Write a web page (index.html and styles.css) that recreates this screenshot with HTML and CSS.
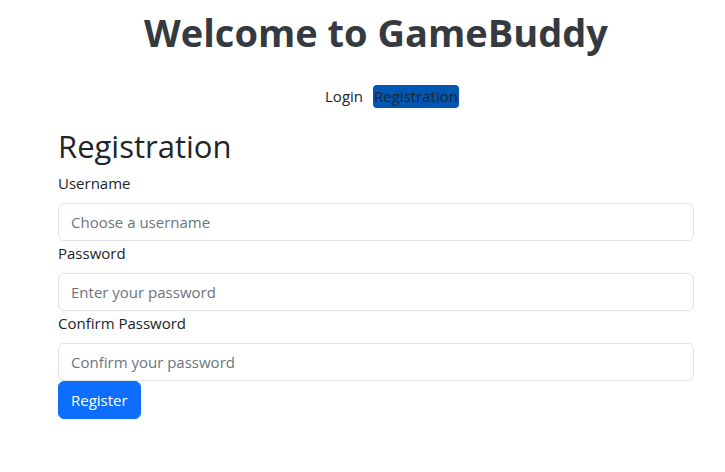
FILE: index.html
```html
<!DOCTYPE html>
<html lang="en">
<head>
<meta charset="utf-8">
<title>GameBuddy</title>
<link rel="stylesheet" href="styles.css">
</head>
<body>
<div class="page">
  <h1 class="title">Welcome to GameBuddy</h1>
  <nav class="nav">
    <a class="nav-link" href="#">Login</a>
    <a class="nav-link active" href="#">Registration</a>
  </nav>
  <form class="form">
    <h2 class="form-title">Registration</h2>
    <label class="form-label" for="u">Username</label>
    <input class="form-control" id="u" type="text" placeholder="Choose a username">
    <label class="form-label" for="p">Password</label>
    <input class="form-control" id="p" type="password" placeholder="Enter your password">
    <label class="form-label" for="c">Confirm Password</label>
    <input class="form-control" id="c" type="password" placeholder="Confirm your password">
    <div><button class="btn" type="button">Register</button></div>
  </form>
</div>
</body>
</html>
```
FILE: styles.css
```css
* { box-sizing: border-box; }
html, body { margin: 0; background: #fff; }
body {
  font-family: "Open Sans", "Noto Sans", sans-serif;
  font-size: 15px;
  line-height: 24px;
  color: #212529;
}
.page {
  padding: 8px 31px 0 58px;
}
.title {
  margin: 0;
  text-align: center;
  font-size: 38px;
  font-weight: 700;
  line-height: 48px;
  color: #343a40;
}
.nav {
  display: flex;
  justify-content: center;
  gap: 10px;
  margin-top: 29px;
  padding-left: 32px;
}
.nav-link {
  color: #212529;
  text-decoration: none;
  line-height: 23px;
}
.nav-link.active {
  background: #0056b3;
  border-radius: 4px;
  padding: 0 1px;
}
.form {
  display: flex;
  flex-direction: column;
}
.form-title {
  margin: 19px 0 6px;
  font-size: 31px;
  font-weight: 500;
  line-height: 38px;
}
.form-label {
  margin-bottom: 8px;
  line-height: 24px;
}
.form-control {
  display: block;
  width: 100%;
  height: 38px;
  padding: 6px 12px;
  font: inherit;
  color: #212529;
  border: 1px solid #dee2e6;
  border-radius: 6px;
  background: #fff;
}
.form-control::placeholder { color: #6c757d; }
.btn {
  height: 38px;
  padding: 6px 12px;
  font: inherit;
  color: #fff;
  background: #0d6efd;
  border: 1px solid #0d6efd;
  border-radius: 6px;
}
```
